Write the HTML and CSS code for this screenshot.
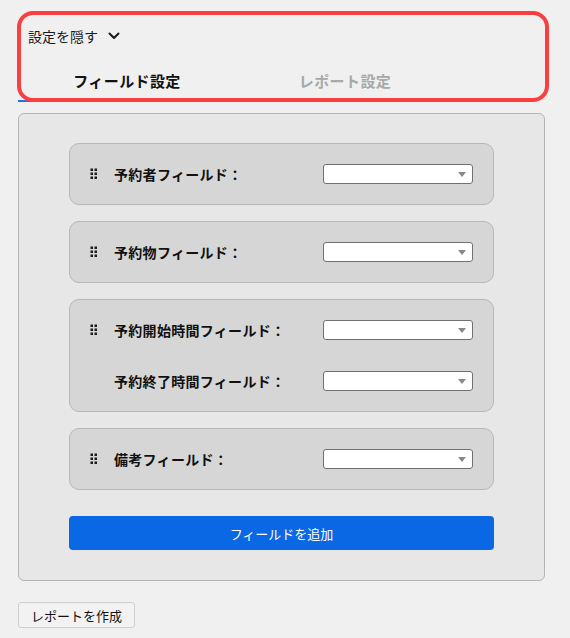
FILE: index.html
```html
<!DOCTYPE html>
<html lang="ja">
<head>
<meta charset="utf-8">
<title>設定</title>
<link rel="stylesheet" href="styles.css">
</head>
<body>
<div class="page">
  <div class="toggle">
    <span>設定を隠す</span>
    <svg class="chev" width="12" height="8" viewBox="0 0 12 8"><polyline points="1.5,1.5 6,6 10.5,1.5" fill="none" stroke="#1a1a1a" stroke-width="2" stroke-linecap="round" stroke-linejoin="round"/></svg>
  </div>
  <div class="tabs">
    <div class="tab active">フィールド設定</div>
    <div class="tab">レポート設定</div>
  </div>
  <div class="panel">
    <div class="card">
      <div class="row">
        <span class="handle"><svg width="8" height="12" viewBox="0 0 8 12"><g fill="#1a1a1a"><rect x="0.5" y="0.5" width="2.5" height="2.5"/><rect x="4.5" y="0.5" width="2.5" height="2.5"/><rect x="0.5" y="4.5" width="2.5" height="2.5"/><rect x="4.5" y="4.5" width="2.5" height="2.5"/><rect x="0.5" y="8.5" width="2.5" height="2.5"/><rect x="4.5" y="8.5" width="2.5" height="2.5"/></g></svg></span>
        <span class="label">予約者フィールド：</span>
        <div class="select"></div>
      </div>
    </div>
    <div class="card">
      <div class="row">
        <span class="handle"><svg width="8" height="12" viewBox="0 0 8 12"><g fill="#1a1a1a"><rect x="0.5" y="0.5" width="2.5" height="2.5"/><rect x="4.5" y="0.5" width="2.5" height="2.5"/><rect x="0.5" y="4.5" width="2.5" height="2.5"/><rect x="4.5" y="4.5" width="2.5" height="2.5"/><rect x="0.5" y="8.5" width="2.5" height="2.5"/><rect x="4.5" y="8.5" width="2.5" height="2.5"/></g></svg></span>
        <span class="label">予約物フィールド：</span>
        <div class="select"></div>
      </div>
    </div>
    <div class="card">
      <div class="row">
        <span class="handle"><svg width="8" height="12" viewBox="0 0 8 12"><g fill="#1a1a1a"><rect x="0.5" y="0.5" width="2.5" height="2.5"/><rect x="4.5" y="0.5" width="2.5" height="2.5"/><rect x="0.5" y="4.5" width="2.5" height="2.5"/><rect x="4.5" y="4.5" width="2.5" height="2.5"/><rect x="0.5" y="8.5" width="2.5" height="2.5"/><rect x="4.5" y="8.5" width="2.5" height="2.5"/></g></svg></span>
        <span class="label">予約開始時間フィールド：</span>
        <div class="select"></div>
      </div>
      <div class="row">
        <span class="handle"></span>
        <span class="label">予約終了時間フィールド：</span>
        <div class="select"></div>
      </div>
    </div>
    <div class="card">
      <div class="row">
        <span class="handle"><svg width="8" height="12" viewBox="0 0 8 12"><g fill="#1a1a1a"><rect x="0.5" y="0.5" width="2.5" height="2.5"/><rect x="4.5" y="0.5" width="2.5" height="2.5"/><rect x="0.5" y="4.5" width="2.5" height="2.5"/><rect x="4.5" y="4.5" width="2.5" height="2.5"/><rect x="0.5" y="8.5" width="2.5" height="2.5"/><rect x="4.5" y="8.5" width="2.5" height="2.5"/></g></svg></span>
        <span class="label">備考フィールド：</span>
        <div class="select"></div>
      </div>
    </div>
    <button class="add">フィールドを追加</button>
  </div>
  <button class="report">レポートを作成</button>
  <div class="highlight"></div>
</div>
</body>
</html>
```
FILE: styles.css
```css
html, body {
  margin: 0;
  padding: 0;
  background: #f0f0f0;
  font-family: "Noto Sans CJK JP", "Noto Sans", sans-serif;
  color: #1a1a1a;
}
.page {
  position: relative;
  width: 527px;
  padding: 26px 0 0 18px;
}
.toggle {
  display: flex;
  align-items: center;
  gap: 10px;
  padding-left: 10px;
  font-size: 14px;
  line-height: 20px;
  height: 20px;
}
.chev { display: block; }
.tabs {
  display: flex;
  margin-top: 20px;
}
.tab {
  width: 218px;
  text-align: center;
  font-size: 15px;
  font-weight: 700;
  line-height: 22px;
  letter-spacing: 0.4px;
  padding: 4px 0 8px;
  color: #a8a8a8;
  border-bottom: 2px solid transparent;
}
.tab.active {
  color: #111;
  border-bottom-color: #1a73e8;
}
.panel {
  margin-top: 11px;
  border: 1px solid #b4b4b4;
  border-radius: 6px;
  background: #e7e7e7;
  padding: 29px 50px 30px;
  display: flex;
  flex-direction: column;
  gap: 16px;
}
.card {
  background: #d6d6d6;
  border: 1px solid #b8b8b8;
  border-radius: 10px;
  padding: 20px;
  display: flex;
  flex-direction: column;
  gap: 31px;
}
.row {
  display: flex;
  align-items: center;
  height: 20px;
}
.handle {
  width: 24px;
  display: flex;
  align-items: center;
}
.handle svg { display: block; }
.label {
  font-size: 14px;
  font-weight: 700;
  color: #111;
  line-height: 20px;
  letter-spacing: 0.3px;
}
.select {
  margin-left: auto;
  width: 148px;
  height: 18px;
  background: #fff;
  border: 1px solid #707070;
  border-radius: 3px;
  position: relative;
}
.select::after {
  content: "";
  position: absolute;
  right: 6px;
  top: 7px;
  border-left: 4px solid transparent;
  border-right: 4px solid transparent;
  border-top: 5px solid #888;
}
.add {
  margin-top: 10px;
  height: 34px;
  border: none;
  border-radius: 4px;
  background: #0b68e4;
  color: #fff;
  font-family: inherit;
  font-size: 13px;
  padding: 0;
}
.report {
  margin-top: 21px;
  width: 117px;
  height: 26px;
  background: #f2f2f2;
  border: 1px solid #cfcfcf;
  border-radius: 3px;
  font-family: inherit;
  font-size: 13px;
  color: #111;
  padding: 0;
}
.highlight {
  position: absolute;
  left: 17px;
  top: 11px;
  width: 524px;
  height: 83px;
  border: 4px solid #f93f3f;
  border-radius: 16px;
  pointer-events: none;
}
```
